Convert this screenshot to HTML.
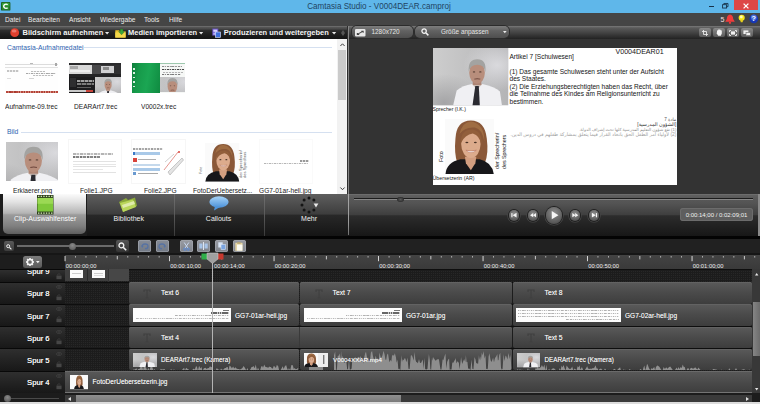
<!DOCTYPE html>
<html lang="de">
<head>
<meta charset="utf-8">
<title>Camtasia Studio - V0004DEAR.camproj</title>
<style>
html,body{margin:0;padding:0;}
body{width:760px;height:404px;position:relative;overflow:hidden;background:#2c2c2c;font-family:"Liberation Sans",sans-serif;}
.a{position:absolute;}
.t{position:absolute;white-space:nowrap;line-height:1;}
svg{position:absolute;overflow:visible;}
#title{left:0;top:0;width:760px;height:12.7px;background:#5fb7ea;}
#title .cap{left:-0.7px;width:760px;text-align:center;top:2.1px;font-size:8.8px;color:#1f4462;transform:scaleX(.92);transform-origin:379.5px 0;}
#menu{left:0;top:12.7px;width:760px;height:13.3px;background:#454545;}
#menu .t{top:2.9px;font-size:7.2px;color:#ececec;transform:scaleX(.915);transform-origin:0 0;}
#tbL{left:0;top:26px;width:349px;height:13px;background:linear-gradient(#787878 0,#575757 9%,#464646 24%,#2d2d2d 34%,#202020 60%,#141414 100%);}
#tbL .t{top:3px;font-size:7.5px;font-weight:bold;color:#f4f4f4;}
#tbR{left:349px;top:26px;width:411px;height:13px;background:linear-gradient(#7a7a7a 0,#5a5a5a 15%,#444 50%,#222 100%);}
.pill{position:absolute;top:0.3px;height:12.2px;border-radius:5px;background:linear-gradient(#7e7e7e,#626262 40%,#4e4e4e);box-shadow:0 0 0 1px #2c2c2c;}
.pill .t{font-size:6.4px;color:#e6e6e6;top:3px;}
.vb{position:absolute;top:2px;width:12px;height:9px;border-radius:2px;background:linear-gradient(#8a8a8a,#5a5a5a);}
#bin{left:0;top:39px;width:337px;height:155px;background:#fff;overflow:hidden;}
#bin .h{font-size:7.3px;color:#2f64b0;transform:scaleX(.93);transform-origin:0 0;margin-top:-0.3px;}
#bin .l{font-size:7.1px;color:#1a1a1a;transform:scaleX(.93);transform-origin:0 0;margin-top:0.7px;}
#bin .hl{position:absolute;height:1px;background:#d5e0f0;}
.th{position:absolute;overflow:hidden;}
#sb{left:337px;top:39px;width:10px;height:155px;background:#f2f2f2;}
#tabs{left:0;top:193.7px;width:349px;height:42px;background:#1c1c1c;}
.tab{position:absolute;top:0;height:42px;background:linear-gradient(#5e5e5e 0,#3d3d3d 48%,#282828 50%,#151515 100%);}
.tab .t{top:21.5px;font-size:7px;color:#efefef;left:0;width:100%;text-align:center;}
#prev{left:349px;top:39px;width:411px;height:155px;background:#333;}
#canvas{left:432.5px;top:47.7px;width:244.3px;height:137.1px;background:#fff;overflow:hidden;color:#111;}
#canvas .t{font-size:6.55px;color:#151515;}
#canvas .ar{font-family:"Liberation Sans","DejaVu Sans",sans-serif;}
#play{left:349px;top:194px;width:411px;height:42px;background:linear-gradient(#626262 0,#585858 12%,#545454 22%,#3f3f3f 49%,#2c2c2c 52%,#171717 100%);}
#tl{left:0;top:236px;width:760px;height:168px;background:#212121;overflow:hidden;}
.trk{position:absolute;left:0;width:65px;overflow:hidden;background:linear-gradient(#2f2f2f,#222 55%,#181818);border-top:1px solid #080808;box-sizing:border-box;}
.trk .t{left:27px;font-size:7.7px;color:#fafafa;text-shadow:0 0 .4px #ddd;}
.lane{position:absolute;left:65px;width:687px;background-color:#1c1c1c;background-image:linear-gradient(45deg,#272727 25%,transparent 25%,transparent 75%,#272727 75%);background-size:2px 2px;border-top:1px solid #0e0e0e;box-sizing:border-box;}
.clip{position:absolute;border-radius:2px;background:linear-gradient(#5a5a5a,#4a4a4a 50%,#3d3d3d);box-sizing:border-box;overflow:hidden;box-shadow:inset 0 1px 0 #626262;}
.clip .t{font-size:6.55px;color:#f6f6f6;text-shadow:0 0 .4px rgba(255,255,255,.55);}
.tlb{position:absolute;top:4px;height:12.2px;width:13.4px;border-radius:2.5px;background:linear-gradient(#999ca3,#7f838b);box-shadow:inset 0 0 0 .6px #a8abb2;}
</style>
</head>
<body>
<svg width="0" height="0" style="position:absolute"><defs>
<linearGradient id="gm" x1="0" x2="1"><stop offset="0" stop-color="#cdcdcd"/><stop offset="1" stop-color="#b4b4b6"/></linearGradient>
<radialGradient id="gm2" cx=".15" cy=".95" r=".5"><stop offset="0" stop-color="#9c9c9e" stop-opacity=".8"/><stop offset="1" stop-color="#9c9c9e" stop-opacity="0"/></radialGradient>
<radialGradient id="gm3" cx=".85" cy=".3" r=".45"><stop offset="0" stop-color="#e2e2e6" stop-opacity=".8"/><stop offset="1" stop-color="#e2e2e6" stop-opacity="0"/></radialGradient>
<symbol id="man" viewBox="0 0 300 233" preserveAspectRatio="none">
<rect width="300" height="233" fill="url(#gm)"/>
<rect width="300" height="233" fill="url(#gm2)"/><rect width="300" height="233" fill="url(#gm3)"/>
<path d="M80 233 L94 172 Q118 152 156 146 L196 146 Q246 158 266 176 L274 233Z" fill="#f0f0f3"/>
<path d="M156 146 L174 170 L196 146Z" fill="#cdbfb8"/>
<path d="M168 154 L182 154 L186 233 L157 233Z" fill="#2b2b31"/>
<rect x="158" y="120" width="34" height="30" fill="#ad8473"/>
<ellipse cx="175" cy="100" rx="31" ry="45" fill="#b88e7c"/>
<path d="M142 96 Q138 46 176 46 Q214 46 208 98 Q204 68 176 68 Q148 68 142 96Z" fill="#a3a3a1"/>
<ellipse cx="163" cy="97" rx="5" ry="2.5" fill="#5a4238"/><ellipse cx="188" cy="97" rx="5" ry="2.5" fill="#5a4238"/>
<path d="M164 126 Q176 122 188 126" stroke="#6e463c" stroke-width="4" fill="none"/>
</symbol>
<symbol id="woman" viewBox="0 0 197 219" preserveAspectRatio="none">
<rect width="197" height="219" fill="#fafafa"/>
<path d="M104 6 Q46 6 42 78 Q36 140 50 176 L160 176 Q176 140 168 78 Q160 6 104 6Z" fill="#8a5838"/>
<path d="M104 10 Q70 12 58 60 Q80 30 120 34 Q150 40 158 90 Q160 20 104 10Z" fill="#a87648" opacity=".7"/>
<path d="M2 219 Q6 172 62 160 L140 160 Q190 172 196 219Z" fill="#17171a"/>
<path d="M80 150 L126 150 L122 176 L104 204 L84 176Z" fill="#d29e80"/>
<ellipse cx="104" cy="100" rx="39" ry="55" fill="#dcab8c"/>
<path d="M64 96 Q62 40 112 42 Q152 50 146 104 Q140 66 112 58 Q80 62 64 96Z" fill="#925f3b"/>
<ellipse cx="88" cy="94" rx="6" ry="3" fill="#4a3428"/><ellipse cx="122" cy="94" rx="6" ry="3" fill="#4a3428"/>
<path d="M84 124 Q104 142 126 124 Q104 131 84 124Z" fill="#fff" stroke="#b06a5a" stroke-width="2"/>
</symbol>
</defs></svg>
<div id="title" class="a"><svg style="left:0.8px;top:2.2px" width="9.4" height="8.6" viewBox="0 0 11 11" preserveAspectRatio="none"><rect x="0" y="0" width="11" height="11" rx="1.2" fill="#1d5a20"/><rect x="1" y="1" width="9" height="5" rx="1" fill="#35a13a"/><rect x="1" y="5" width="9" height="5" fill="#2a8a2e"/><path d="M7.8 3.6 A2.7 2.7 0 1 0 7.8 7.4" stroke="#fff" stroke-width="1.7" fill="none"/></svg><div class="t cap">Camtasia Studio - V0004DEAR.camproj</div><div class="a" style="left:709px;top:6px;width:5px;height:1.4px;background:#16324a"></div><svg style="left:722.3px;top:2.5px" width="6.6" height="5.6" viewBox="0 0 8 7"><rect x="0.6" y="2.1" width="5" height="4.2" fill="none" stroke="#16324a" stroke-width="1.1"/><path d="M2.2 2 V0.6 H7.4 V4.6 H5.8" fill="none" stroke="#16324a" stroke-width="1.1"/></svg><div class="a" style="left:733.5px;top:0;width:24.5px;height:9.8px;background:#dd4747"></div><svg style="left:743px;top:2.5px" width="6" height="6" viewBox="0 0 6 6"><path d="M0.6 0.6 L5.4 5.4 M5.4 0.6 L0.6 5.4" stroke="#fff" stroke-width="1.3"/></svg></div>
<div id="menu" class="a"><div class="t" style="left:4.5px">Datei</div><div class="t" style="left:28.3px">Bearbeiten</div><div class="t" style="left:68.5px">Ansicht</div><div class="t" style="left:99.5px">Wiedergabe</div><div class="t" style="left:144px">Tools</div><div class="t" style="left:169px">Hilfe</div><div class="t" style="left:720.5px;color:#f6e0e0;font-size:7px;top:2.9px;transform:none">5</div><svg style="left:725px;top:1.8px" width="10" height="10" viewBox="0 0 10 10"><path d="M5 0.4 Q1.8 1 1.8 5 L0.2 7.8 H9.8 L8.2 5 Q8.2 1 5 0.4Z" fill="#f03c3c"/><circle cx="5" cy="8.8" r="1.1" fill="#f03c3c"/></svg><svg style="left:738px;top:1.2px" width="7.4" height="10.2" viewBox="0 0 8 11"><circle cx="4" cy="4" r="3.3" fill="#f6e81e"/><path d="M2.4 6 H5.6 L5 9 H3Z" fill="#e6cf1c"/><circle cx="3.6" cy="3.2" r="1.5" fill="#fffcc0"/></svg><svg style="left:749px;top:1.2px" width="9.6" height="9.6" viewBox="0 0 10 10"><circle cx="5" cy="5" r="4.6" fill="#1838b4"/><circle cx="5" cy="3.6" r="3" fill="#5f86ea" opacity=".7"/><text x="5" y="7.8" font-size="7.5" font-weight="bold" text-anchor="middle" fill="#fff" font-family="Liberation Sans, sans-serif">?</text></svg></div>
<div id="tbL" class="a"><svg style="left:9.6px;top:2.2px" width="9.4" height="9.4" viewBox="0 0 10 10"><circle cx="5" cy="5" r="4.7" fill="#e0402e"/><ellipse cx="4.4" cy="3.2" rx="2.6" ry="1.7" fill="#f08a80" opacity=".75"/></svg><div class="t" style="left:22.5px">Bildschirm aufnehmen</div><svg style="left:104.5px;top:5.5px" width="4.2" height="2.4" viewBox="0 0 4 2.4" preserveAspectRatio="none"><path d="M0 0 H4 L2 2.4Z" fill="#e8e8e8"/></svg><svg style="left:114.5px;top:2.5px" width="11" height="9" viewBox="0 0 11 9"><path d="M0.3 1.2 H4 L5 2.2 H10.6 V8.6 H0.3Z" fill="#e9c22e"/><path d="M0.3 3.4 H10.6 V8.6 H0.3Z" fill="#f4d84a"/><path d="M5.2 0.2 H8 V2.6 H9.6 L6.6 5.8 L3.6 2.6 H5.2Z" fill="#3aa63a" stroke="#1e6a1e" stroke-width=".4"/></svg><div class="t" style="left:128px">Medien importieren</div><svg style="left:199.2px;top:5.5px" width="4.2" height="2.4" viewBox="0 0 4 2.4" preserveAspectRatio="none"><path d="M0 0 H4 L2 2.4Z" fill="#e8e8e8"/></svg><svg style="left:212px;top:2px" width="9" height="10" viewBox="0 0 9 10"><rect x="0.3" y="0.6" width="6" height="7" fill="#6a54c8"/><rect x="1.3" y="1.6" width="4" height="2.2" fill="#d9d2ff"/><rect x="1.3" y="4.6" width="4" height="2.2" fill="#b9aef5"/><rect x="3.4" y="4" width="5.2" height="5.4" fill="#3f6fdc" stroke="#dfe6ff" stroke-width=".6"/></svg><div class="t" style="left:223.8px">Produzieren und weitergeben</div><svg style="left:332px;top:5.5px" width="4.2" height="2.4" viewBox="0 0 4 2.4" preserveAspectRatio="none"><path d="M0 0 H4 L2 2.4Z" fill="#e8e8e8"/></svg><svg style="left:341px;top:4px" width="4" height="6" viewBox="0 0 4 6"><path d="M2 0 L4 3 L2 6 L0 3Z" fill="#555"/></svg></div>
<div id="tbR" class="a"><div class="pill" style="left:2.5px;width:61px"><svg style="left:3px;top:2.3px" width="10.5" height="7.6" viewBox="0 0 9 7" preserveAspectRatio="none"><rect x="0" y="0" width="9" height="7" rx="1" fill="#e8e8e8"/><path d="M2 5 L7 2 M5.4 2 H7 V3.4 M2 3.6 V5 H3.6" stroke="#444" stroke-width=".9" fill="none"/></svg><div class="t" style="left:20px">1280x720</div></div><div class="pill" style="left:66px;width:94px"><svg style="left:6px;top:2px" width="8" height="8" viewBox="0 0 8 8"><circle cx="3.1" cy="3.1" r="2.2" fill="none" stroke="#f4f4f4" stroke-width="1.3"/><path d="M4.8 4.8 L7.4 7.4" stroke="#f4f4f4" stroke-width="1.5"/></svg><div class="t" style="left:26px">Größe anpassen</div><svg style="left:87.5px;top:5px" width="3.6" height="2.2" viewBox="0 0 4 2.4" preserveAspectRatio="none"><path d="M0 0 H4 L2 2.4Z" fill="#eee"/></svg></div><div class="vb" style="left:350px"><svg style="left:3px;top:1.5px" width="6" height="6" viewBox="0 0 6 6"><path d="M1.5 0 V4.5 H6 M0 1.5 H4.5 V6" stroke="#e8e8e8" stroke-width=".9" fill="none"/></svg></div><div class="vb" style="left:364px"><svg style="left:2.5px;top:1px" width="7" height="7" viewBox="0 0 7 7"><path d="M1 3.4 V1.6 L2.2 1.2 V0.6 L3.4 0.4 V0.6 L4.6 0.8 V1.2 L5.8 1.6 V4.6 L4.8 6.8 H2.2 L0.4 4 Z" fill="#f4f4f4"/></svg></div><div class="vb" style="left:378px"><svg style="left:2px;top:1.5px" width="8" height="6" viewBox="0 0 8 6"><rect x="2" y="1.4" width="4" height="3.2" fill="#f0f0f0"/><path d="M0.5 2 V0.5 H2 M6 0.5 H7.5 V2 M7.5 4 V5.5 H6 M2 5.5 H0.5 V4" stroke="#f0f0f0" stroke-width=".9" fill="none"/></svg></div><div class="vb" style="left:392px"><svg style="left:2px;top:1.5px" width="8" height="6" viewBox="0 0 8 6"><rect x="0.4" y="0.4" width="5" height="3.6" fill="#f0f0f0"/><rect x="3" y="2.4" width="4.6" height="3.2" fill="#f0f0f0" stroke="#6a6a6a" stroke-width=".6"/></svg></div></div>
<div id="bin" class="a"><div class="t h" style="left:7px;top:5.1px">Camtasia-Aufnahmedatei</div><div class="hl" style="left:84px;top:8.3px;width:248px"></div><div class="th" style="left:5px;top:23px;width:53.2px;height:31px;background:#fefefe;"><div class="a" style="left:0;top:1.5px;width:53px;height:1px;background:#dcdcdc"></div><div class="a" style="left:25px;top:0.8px;width:3px;height:1.6px;background:#b8b8b8"></div><div class="a" style="left:50px;top:1px;width:2px;height:3px;background:#a8a8a8"></div><div class="a" style="left:0;top:5.4px;width:53px;height:1px;background:#e2e2e2"></div><div class="a" style="left:2px;top:8.4px;width:12px;height:1.2px;background:repeating-linear-gradient(90deg,#c4c4c4 0 2px,#eee 2px 3px)"></div><div class="a" style="left:26px;top:8.6px;width:14px;height:1.2px;background:repeating-linear-gradient(90deg,#bcbcbc 0 2px,#eee 2px 3px)"></div><div class="a" style="left:21px;top:11px;width:30px;height:1.4px;background:repeating-linear-gradient(90deg,#a6a6a6 0 1.5px,#ddd 1.5px 2.5px,#b4b4b4 2.5px 4px,#eee 4px 5px)"></div><div class="a" style="left:28px;top:13px;width:20px;height:1.2px;background:repeating-linear-gradient(90deg,#bdbdbd 0 2px,#eee 2px 3px)"></div><div class="a" style="left:2px;top:16px;width:4px;height:1px;background:#ddd"></div><div class="a" style="left:24px;top:16px;width:5px;height:1px;background:#d4d4d4"></div><div class="a" style="left:0.5px;top:28.6px;width:52px;height:2px;background:repeating-linear-gradient(90deg,#b8473c 0 2px,#cf7a6c 2px 3px,#a83a30 3px 4.5px,#d89a8c 4.5px 5px)"></div></div><div class="th" style="left:69.3px;top:24.2px;width:52.2px;height:29.6px;background:#38383a;"><div class="a" style="left:0;top:0;width:52.2px;height:2px;background:#2a2a2c"></div><div class="a" style="left:0;top:2px;width:23px;height:8.5px;background:#d9d9d9"></div><div class="a" style="left:1px;top:3px;width:8px;height:3px;background:#a8a8a8"></div><div class="a" style="left:1px;top:7px;width:20px;height:2px;background:#efefef"></div><div class="a" style="left:23px;top:2px;width:9px;height:8.5px;background:#48484a"></div><div class="a" style="left:32px;top:3px;width:13px;height:7px;background:#d0d0d2"></div><div class="a" style="left:34px;top:4px;width:6px;height:3px;background:#8a8a8a"></div><div class="a" style="left:45px;top:2px;width:7.2px;height:8.5px;background:#303032"></div><div class="a" style="left:0;top:10.5px;width:52.2px;height:3px;background:#232325"></div><div class="a" style="left:0;top:13.5px;width:26px;height:16.1px;background:#1c1c1e"></div><div class="a" style="left:1px;top:14.5px;width:6px;height:9px;background:#2e2e30"></div><div class="a" style="left:8px;top:16.4px;width:17px;height:2px;background:repeating-linear-gradient(90deg,#a0a0a0 0 3px,#555 3px 4px)"></div><div class="a" style="left:8px;top:20px;width:17px;height:2.2px;background:repeating-linear-gradient(90deg,#7c7c7c 0 4px,#444 4px 5px)"></div><div class="a" style="left:8px;top:23.4px;width:14px;height:1.6px;background:#5c5c5c"></div><div class="a" style="left:0;top:27.2px;width:17px;height:2px;background:#c8c8c8"></div><div class="a" style="left:17px;top:27.2px;width:7px;height:2px;background:#c8433a"></div><svg style="left:26px;top:14px;overflow:hidden" width="26.2" height="15.6" viewBox="60 30 230 137" preserveAspectRatio="none"><use href="#man" width="300" height="233"/></svg></div><div class="th" style="left:132.2px;top:23.5px;width:52.8px;height:30px;background:#f6f8f6;"><div class="a" style="left:0;top:0;width:28px;height:30px;background:linear-gradient(100deg,#0d7d3a 0,#169a4a 25%,#1ba653 55%,#0f8a40 100%)"></div><div class="a" style="left:1px;top:5px;width:1.6px;height:20px;background:repeating-linear-gradient(#d8efe0 0 1.6px,transparent 1.6px 4.4px)"></div><div class="a" style="left:28px;top:0;width:24.8px;height:1.4px;background:#9ec8ae"></div><div class="a" style="left:29.5px;top:3.6px;width:20px;height:1.3px;background:repeating-linear-gradient(90deg,#8c8c8c 0 2px,#ddd 2px 3px,#9a9a9a 3px 4.4px,#eee 4.4px 5.2px)"></div><div class="a" style="left:29.5px;top:6.2px;width:22px;height:1.5px;background:repeating-linear-gradient(90deg,#444 0 2px,#bbb 2px 2.8px,#555 2.8px 4.4px,#ddd 4.4px 5px)"></div><div class="a" style="left:31px;top:9px;width:20px;height:1.2px;background:repeating-linear-gradient(90deg,#b4b4b4 0 2px,#eee 2px 3px)"></div><div class="a" style="left:29.5px;top:11.4px;width:19px;height:1.4px;background:repeating-linear-gradient(90deg,#777 0 2px,#ddd 2px 3px,#8a8a8a 3px 4.4px,#eee 4.4px 5.2px)"></div><svg style="left:28px;top:14.8px;overflow:hidden" width="24.8" height="15.2" viewBox="95 40 160 98" preserveAspectRatio="none"><use href="#man" width="300" height="233"/></svg></div><div class="t l" style="left:5px;top:64.5px">Aufnahme-09.trec</div><div class="t l" style="left:74px;top:64.5px">DEARArt7.trec</div><div class="t l" style="left:141px;top:64.5px">V0002x.trec</div><div class="t h" style="left:7px;top:89.4px">Bild</div><div class="hl" style="left:21px;top:92.5px;width:311px"></div><svg style="left:5.5px;top:103px;overflow:hidden" width="52.5" height="39" viewBox="76 28 190 150" preserveAspectRatio="none"><use href="#man" width="300" height="233"/></svg><div class="th" style="left:69px;top:101px;width:52px;height:43px;background:#fff;box-shadow:0 0 0 1px #f6f6f6;"><div class="a" style="left:4px;top:13px;width:40px;height:1.5px;background:repeating-linear-gradient(90deg,#b4b4b4 0 3px,#e0e0e0 3px 4px,#c0c0c0 4px 6px,#f0f0f0 6px 7px)"></div><div class="a" style="left:4px;top:16px;width:27px;height:1.5px;background:repeating-linear-gradient(90deg,#777 0 2px,#ccc 2px 3px,#888 3px 6px,#e8e8e8 6px 7px)"></div><div class="a" style="left:4px;top:21px;width:43px;height:1px;background:#e2e2e2"></div><div class="a" style="left:4px;top:23.5px;width:43px;height:1px;background:#e6e6e6"></div><div class="a" style="left:4px;top:26px;width:43px;height:1px;background:#e2e2e2"></div><div class="a" style="left:4px;top:28.5px;width:30px;height:1px;background:#e6e6e6"></div><div class="a" style="left:4px;top:32px;width:43px;height:1px;background:#e2e2e2"></div></div><div class="th" style="left:132px;top:101px;width:53px;height:43px;background:#fff;box-shadow:0 0 0 1px #f6f6f6;"><div class="a" style="left:1px;top:8px;width:30px;height:1.5px;background:repeating-linear-gradient(90deg,#a0a0a0 0 2px,#e4e4e4 2px 3px,#b0b0b0 3px 5px,#f0f0f0 5px 6px)"></div><div class="a" style="left:1px;top:12px;width:27px;height:3px;background:#a9c9e8"></div><div class="a" style="left:1px;top:12px;width:2px;height:3px;background:#3a7ac8"></div><div class="a" style="left:1px;top:17.5px;width:4px;height:4px;background:#d8423a"></div><div class="a" style="left:6px;top:19px;width:18px;height:1px;background:#b0b0b0"></div><div class="a" style="left:1px;top:24px;width:27px;height:2px;background:#c5d9ec"></div><div class="a" style="left:1px;top:28px;width:27px;height:2.5px;background:#a9c9e8"></div><div class="a" style="left:1px;top:32px;width:3px;height:3px;background:#6a9ad0"></div><div class="a" style="left:6px;top:33px;width:20px;height:1px;background:#a8a8a8"></div><svg style="left:30px;top:8px" width="22" height="30" viewBox="0 0 22 30"><path d="M2 22 L16 4" stroke="#d86a60" stroke-width=".7"/><path d="M6 24 L20 10 L21.5 12 L8 27Z" fill="#e4e4e4" stroke="#9a9a9a" stroke-width=".5"/><path d="M3 14 L12 6" stroke="#b0b0b0" stroke-width=".6"/><circle cx="17" cy="4" r="1" fill="#d8423a"/></svg></div><div class="th" style="left:196px;top:101px;width:56px;height:43px;background:#fff;"><svg style="left:8.5px;top:2.7px" width="34.5" height="38.8"><use href="#woman" width="34.5" height="38.8"/></svg><div class="t" style="left:43.2px;top:37.6px;font-size:4.1px;color:#555;transform:rotate(-90deg);transform-origin:0 0;line-height:1.02;white-space:pre">der Sprecherin/
des Sprechers</div><div class="t" style="left:4.2px;top:34.2px;font-size:3.6px;color:#555;transform:rotate(-90deg);transform-origin:0 0;">Foto</div></div><div class="th" style="left:260px;top:101px;width:52px;height:43px;background:#fff;box-shadow:0 0 0 1px #fafafa;"><div class="a" style="left:4px;top:22.5px;width:44px;height:1.5px;background:repeating-linear-gradient(90deg,#b5b5b5 0 2px,#e4e4e4 2px 3px,#c4c4c4 3px 4px,#eee 4px 5px)"></div><div class="a" style="left:40px;top:20px;width:9px;height:2px;background:repeating-linear-gradient(90deg,#999 0 2px,#ddd 2px 3px)"></div></div><div class="t l" style="left:12.5px;top:148.5px">Erklaerer.png</div><div class="t l" style="left:80px;top:148.5px">Folie1.JPG</div><div class="t l" style="left:143.5px;top:148.5px">Folie2.JPG</div><div class="t l" style="left:193px;top:148.5px">FotoDerUebersetz...</div><div class="t l" style="left:259px;top:148.5px">GG7-01ar-hell.jpg</div></div>
<div id="sb" class="a"><div class="a" style="left:1.4px;top:11px;width:8px;height:50px;background:#cbcbcb"></div><svg style="left:2.5px;top:3.5px" width="5" height="3.5" viewBox="0 0 5 3.5"><path d="M0.4 3 L2.5 0.8 L4.6 3" stroke="#404040" stroke-width="1" fill="none"/></svg><svg style="left:2.5px;top:148px" width="5" height="3.5" viewBox="0 0 5 3.5"><path d="M0.4 0.5 L2.5 2.7 L4.6 0.5" stroke="#404040" stroke-width="1" fill="none"/></svg></div>
<div class="a" style="left:346.6px;top:26px;width:2.6px;height:168px;background:#2e2e2e"></div><div class="a" style="left:347.7px;top:26px;width:1.2px;height:168px;background:#858585"></div><div id="tabs" class="a"><div class="tab" style="left:3px;width:83px;background:linear-gradient(#fbfbfb 0,#e2e2e2 20%,#b4b4b4 48%,#9c9c9c 52%,#808080 80%,#5e5e5e 100%);border-radius:0 0 5px 5px;height:40.5px;"><svg style="left:33.5px;top:1px" width="16.5" height="19.5" viewBox="0 0 19 20" preserveAspectRatio="none"><rect x="0" y="0" width="19" height="20" fill="#2a3a1a"/><rect x="0.5" y="3" width="18" height="14" fill="#7ec83a"/><rect x="0.5" y="3" width="18" height="6" fill="#a8e060" opacity=".7"/><rect x="1.2" y="0.7" width="1.6" height="1.4" fill="#cfe8b0"/><rect x="1.2" y="17.9" width="1.6" height="1.4" fill="#cfe8b0"/><rect x="4.2" y="0.7" width="1.6" height="1.4" fill="#cfe8b0"/><rect x="4.2" y="17.9" width="1.6" height="1.4" fill="#cfe8b0"/><rect x="7.2" y="0.7" width="1.6" height="1.4" fill="#cfe8b0"/><rect x="7.2" y="17.9" width="1.6" height="1.4" fill="#cfe8b0"/><rect x="10.2" y="0.7" width="1.6" height="1.4" fill="#cfe8b0"/><rect x="10.2" y="17.9" width="1.6" height="1.4" fill="#cfe8b0"/><rect x="13.2" y="0.7" width="1.6" height="1.4" fill="#cfe8b0"/><rect x="13.2" y="17.9" width="1.6" height="1.4" fill="#cfe8b0"/><rect x="16.2" y="0.7" width="1.6" height="1.4" fill="#cfe8b0"/><rect x="16.2" y="17.9" width="1.6" height="1.4" fill="#cfe8b0"/></svg><div class="t" style="left:0.6px;top:21.6px;color:#fff;text-shadow:0 0 1px #888">Clip-Auswahlfenster</div></div><div class="tab" style="left:87px;width:87px"><svg style="left:31px;top:3px" width="20" height="16" viewBox="0 0 20 16"><path d="M1 5 L8 1 L10 3 L17 0.5 L19 9 L5 15 Z" fill="#8aa83a"/><path d="M2 6 L15 2.5 L18 10 L5 15Z" fill="#b9d65a"/><path d="M4 8 L16 4 L17 7 L5 11Z" fill="#e8f0c0" opacity=".8"/></svg><div class="t" style="left:-1.75px">Bibliothek</div></div><div class="a" style="left:174px;top:0;width:1px;height:42px;background:linear-gradient(#707070,#5a5a5a 50%,#3a3a3a)"></div><div class="tab" style="left:175px;width:89px"><svg style="left:34px;top:2px" width="20" height="15" viewBox="0 0 20 15"><defs><linearGradient id="gb" x1="0" y1="0" x2="0" y2="1"><stop offset="0" stop-color="#a8d4f8"/><stop offset="1" stop-color="#4a90d8"/></linearGradient></defs><ellipse cx="10" cy="6" rx="9.6" ry="5.8" fill="url(#gb)"/><path d="M6 10 L5 14.6 L11 11Z" fill="#4f95dc"/></svg><div class="t" style="left:-1px">Callouts</div></div><div class="a" style="left:264px;top:0;width:1px;height:42px;background:linear-gradient(#707070,#5a5a5a 50%,#3a3a3a)"></div><div class="tab" style="left:265px;width:83px"><svg style="left:35px;top:2px" width="18" height="18" viewBox="0 0 18 18"><circle cx="9.0" cy="2.0" r="1.5" fill="#141414"/><circle cx="13.9" cy="4.1" r="1.5" fill="#141414"/><path d="M13.6 7.4 H18.4 L16.0 11.4Z" fill="#e8e8e8"/><circle cx="13.9" cy="13.9" r="1.5" fill="#141414"/><circle cx="9.0" cy="16.0" r="1.5" fill="#141414"/><circle cx="4.1" cy="13.9" r="1.5" fill="#141414"/><circle cx="2.0" cy="9.0" r="1.5" fill="#141414"/><circle cx="4.1" cy="4.1" r="1.5" fill="#141414"/></svg><div class="t" style="left:2.6px">Mehr</div></div><div class="a" style="left:347.5px;top:0;width:1.4px;height:41.5px;background:linear-gradient(#a6a6a6,#9a9a9a 70%,#707070)"></div></div>
<div id="prev" class="a"></div><div id="canvas" class="a"><svg style="left:0;top:0" width="75.5" height="57.6"><use href="#man" width="75.5" height="57.6"/></svg><div class="t" style="left:0px;top:59.1px;font-size:5.15px">Sprecher (I.K.)</div><div class="t" style="left:183px;top:0.9px;font-size:7.1px">V0004DEAR01</div><div class="t" style="left:77px;top:6.20px">Artikel 7 [Schulwesen]</div><div class="t" style="left:77px;top:21.14px">(1) Das gesamte Schulwesen steht unter der Aufsicht</div><div class="t" style="left:77px;top:28.61px">des Staates.</div><div class="t" style="left:77px;top:36.08px">(2) Die Erziehungsberechtigten haben das Recht, über</div><div class="t" style="left:77px;top:43.55px">die Teilnahme des Kindes am Religionsunterricht zu</div><div class="t" style="left:77px;top:51.02px">bestimmen.</div><svg style="left:12.5px;top:71.6px" width="49" height="55"><use href="#woman" width="49" height="55"/></svg><div class="t" style="left:0px;top:127.9px;font-size:5.25px">Übersetzerin (AR)</div><div class="t" style="left:6.8px;top:114.8px;font-size:5.3px;transform:rotate(-90deg);transform-origin:0 0;">Foto</div><div class="t" style="left:61.3px;top:121.1px;font-size:5.3px;transform:rotate(-90deg);transform-origin:0 0;line-height:1.27;white-space:pre">der Sprecherin/
des Sprechers</div><div class="t ar" dir="rtl" style="right:0.5px;top:70.6px;font-size:4.6px;color:#555">مادة 7</div><div class="t ar" dir="rtl" style="right:0.5px;top:74.9px;font-size:4.95px;color:#333">[الشؤون المدرسية]</div><div class="t ar" dir="rtl" style="right:0.5px;top:80.3px;font-size:4.24px;color:#8a8a8a">(1) تقع شؤون التعليم المدرسية كلها تحت إشراف الدولة.</div><div class="t ar" dir="rtl" style="right:0.5px;top:85.5px;font-size:4.8px;color:#a0a0a0">(2) لأولياء أمر الطفل الحق باتخاذ القرار فيما يتعلق بمشاركة طفلهم في دروس الدين.</div></div>
<div id="play" class="a"><div class="a" style="left:0;top:0;width:411px;height:1px;background:#6c6c6c"></div><div class="a" style="left:5px;top:4.1px;width:399px;height:1px;background:#1c1c1c"></div><div class="a" style="left:5px;top:5.1px;width:399px;height:1px;background:#868686"></div><div class="a" style="left:47.7px;top:2.6px;width:7.6px;height:5.4px;border-radius:50%;background:radial-gradient(#5a5a5a,#161616)"></div><div class="a" style="left:160.1px;top:16.3px;width:10.4px;height:10.4px;border-radius:50%;background:radial-gradient(circle at 50% 35%,#8e8e8e,#5a5a5a 70%,#3a3a3a);box-shadow:0 0 0 1px #202020, 0 0 0 1.6px #4a4a4a;"><svg style="left:0;top:0" width="10.4" height="10.4" viewBox="-10 -10 20 20"><rect x="-5.5" y="-4" width="2.2" height="8" fill="#f6f6f6"/><path d="M4.5 -4.5 V4.5 L-3 0Z" fill="#f6f6f6"/></svg></div><div class="a" style="left:178.8px;top:16.3px;width:10.4px;height:10.4px;border-radius:50%;background:radial-gradient(circle at 50% 35%,#8e8e8e,#5a5a5a 70%,#3a3a3a);box-shadow:0 0 0 1px #202020, 0 0 0 1.6px #4a4a4a;"><svg style="left:0;top:0" width="10.4" height="10.4" viewBox="-10 -10 20 20"><path d="M0 -4 V4 L-6 0Z" fill="#f6f6f6"/><path d="M5.5 -4 V4 L-0.5 0Z" fill="#f6f6f6"/></svg></div><div class="a" style="left:196.8px;top:13.3px;width:16.4px;height:16.4px;border-radius:50%;background:radial-gradient(circle at 50% 35%,#8e8e8e,#5a5a5a 70%,#3a3a3a);box-shadow:0 0 0 1px #202020, 0 0 0 1.6px #4a4a4a;"><svg style="left:0;top:0" width="16.4" height="16.4" viewBox="-10 -10 20 20"><path d="M-3 -5 V5 L5.2 0Z" fill="#f6f6f6"/></svg></div><div class="a" style="left:220.8px;top:16.3px;width:10.4px;height:10.4px;border-radius:50%;background:radial-gradient(circle at 50% 35%,#8e8e8e,#5a5a5a 70%,#3a3a3a);box-shadow:0 0 0 1px #202020, 0 0 0 1.6px #4a4a4a;"><svg style="left:0;top:0" width="10.4" height="10.4" viewBox="-10 -10 20 20"><path d="M0 -4 V4 L6 0Z" fill="#f6f6f6"/><path d="M-5.5 -4 V4 L0.5 0Z" fill="#f6f6f6"/></svg></div><div class="a" style="left:239.6px;top:16.3px;width:10.4px;height:10.4px;border-radius:50%;background:radial-gradient(circle at 50% 35%,#8e8e8e,#5a5a5a 70%,#3a3a3a);box-shadow:0 0 0 1px #202020, 0 0 0 1.6px #4a4a4a;"><svg style="left:0;top:0" width="10.4" height="10.4" viewBox="-10 -10 20 20"><rect x="3.3" y="-4" width="2.2" height="8" fill="#f6f6f6"/><path d="M-4.5 -4.5 V4.5 L3 0Z" fill="#f6f6f6"/></svg></div><div class="a" style="left:331px;top:14px;width:73px;height:13px;border-radius:3px;background:#5e5e5e;box-shadow:0 0 0 1px #6c6c6c inset"><div class="t" style="left:0;width:73px;text-align:center;top:3.5px;font-size:6px;color:#f0f0f0">0:00:14;00 / 0:02:09;01</div></div><div class="a" style="left:409px;top:0;width:2px;height:42px;background:#8a8a8a"></div></div>
<div id="tl" class="a"><div class="a" style="left:0;top:-0.5px;width:760px;height:4px;background:#040404"></div><div class="a" style="left:0;top:3px;width:760px;height:16px;background:#212121"></div><div class="a" style="left:3.5px;top:5px;width:10.5px;height:10px;border-radius:2px;background:linear-gradient(#5a5a5a,#3c3c3c)"><svg style="left:2.5px;top:2.5px" width="6" height="6" viewBox="0 0 6 6"><circle cx="2.2" cy="2.2" r="1.5" fill="none" stroke="#f0f0f0" stroke-width="1"/><path d="M3.4 3.4 L5.4 5.4" stroke="#f0f0f0" stroke-width="1.1"/></svg></div><div class="a" style="left:17px;top:9.3px;width:97px;height:1.4px;background:#6a6a6a"></div><div class="a" style="left:68.5px;top:6.5px;width:7px;height:7px;border-radius:50%;background:radial-gradient(circle at 50% 35%,#8a8a8a,#555)"></div><div class="a" style="left:116px;top:4px;width:12.5px;height:12px;border-radius:2px;background:linear-gradient(#555,#333)"><svg style="left:2px;top:2px" width="9" height="9" viewBox="0 0 9 9"><circle cx="3.4" cy="3.4" r="2.4" fill="none" stroke="#f4f4f4" stroke-width="1.3"/><path d="M5.2 5.2 L8.2 8.2" stroke="#f4f4f4" stroke-width="1.6"/></svg></div><div class="tlb" style="left:138px;background:linear-gradient(#858b97,#727985)"><svg style="left:2.5px;top:2.5px" width="8" height="7" viewBox="0 0 8 7"><path d="M1.2 3.4 Q1.2 1 4 1 Q7 1 7 3.4 Q7 5.6 4 5.6" fill="none" stroke="#5672a4" stroke-width="1.3"/><path d="M0 2.6 L1.2 5 L2.8 2.8Z" fill="#5672a4"/></svg></div><div class="tlb" style="left:155.5px;background:linear-gradient(#858b97,#727985)"><svg style="left:2.5px;top:2.5px" width="8" height="7" viewBox="0 0 8 7"><path d="M6.8 3.4 Q6.8 1 4 1 Q1 1 1 3.4 Q1 5.6 4 5.6" fill="none" stroke="#5672a4" stroke-width="1.3"/><path d="M8 2.6 L6.8 5 L5.2 2.8Z" fill="#5672a4"/></svg></div><div class="tlb" style="left:179.5px"><svg style="left:3px;top:1.5px" width="7" height="9" viewBox="0 0 7 9"><path d="M1.2 0.5 L5 6.2 M5.8 0.5 L2 6.2" stroke="#c8d8f0" stroke-width="1"/><circle cx="1.8" cy="7.2" r="1.2" fill="none" stroke="#5a8ad8" stroke-width=".9"/><circle cx="5.2" cy="7.2" r="1.2" fill="none" stroke="#5a8ad8" stroke-width=".9"/></svg></div><div class="tlb" style="left:197px"><svg style="left:2px;top:2px" width="9" height="8" viewBox="0 0 9 8"><rect x="0.3" y="1.5" width="3.2" height="5" fill="#a8c4e8"/><rect x="5.5" y="1.5" width="3.2" height="5" fill="#a8c4e8"/><path d="M4.5 0 V8" stroke="#e8eef8" stroke-width=".9"/></svg></div><div class="tlb" style="left:215px"><svg style="left:2.5px;top:2px" width="8" height="8" viewBox="0 0 8 8"><rect x="0.3" y="0.3" width="4.4" height="5.2" fill="#d8e4f4"/><rect x="3" y="2.4" width="4.6" height="5.3" fill="#7aa4e0" stroke="#e8eef8" stroke-width=".5"/></svg></div><div class="tlb" style="left:232.5px"><svg style="left:2.5px;top:1.5px" width="8" height="9" viewBox="0 0 8 9"><rect x="0.3" y="0.8" width="7.2" height="8" fill="#e6d6a4"/><rect x="2.2" y="0" width="3.4" height="1.8" fill="#b8a878"/><rect x="2" y="2.6" width="5.4" height="6" fill="#fbfbf2"/></svg></div><div class="a" style="left:0;top:16.5px;width:760px;height:2.7px;background:#161616"></div><div class="a" style="left:0;top:19px;width:65px;height:13.5px;background:#1d1d1d"></div><div class="a" style="left:65px;top:19px;width:695px;height:13.5px;background:linear-gradient(#434343,#3a3a3a)"></div><div class="a" style="left:22.5px;top:19.5px;width:19.5px;height:12.5px;border-radius:2.5px;background:linear-gradient(#7c7c7c,#5a5a5a)"><svg style="left:3.5px;top:2.2px" width="8" height="8" viewBox="-4 -4 8 8"><circle r="2.6" fill="none" stroke="#f4f4f4" stroke-width="1.5"/><rect x="-0.8" y="-4" width="1.6" height="1.6" fill="#f4f4f4" transform="rotate(0)"/><rect x="-0.8" y="-4" width="1.6" height="1.6" fill="#f4f4f4" transform="rotate(45)"/><rect x="-0.8" y="-4" width="1.6" height="1.6" fill="#f4f4f4" transform="rotate(90)"/><rect x="-0.8" y="-4" width="1.6" height="1.6" fill="#f4f4f4" transform="rotate(135)"/><rect x="-0.8" y="-4" width="1.6" height="1.6" fill="#f4f4f4" transform="rotate(180)"/><rect x="-0.8" y="-4" width="1.6" height="1.6" fill="#f4f4f4" transform="rotate(225)"/><rect x="-0.8" y="-4" width="1.6" height="1.6" fill="#f4f4f4" transform="rotate(270)"/><rect x="-0.8" y="-4" width="1.6" height="1.6" fill="#f4f4f4" transform="rotate(315)"/></svg><svg style="left:13.5px;top:5.2px" width="3.6" height="2.2" viewBox="0 0 4 2.4" preserveAspectRatio="none"><path d="M0 0 H4 L2 2.4Z" fill="#f4f4f4"/></svg></div><svg style="left:0;top:19.5px" width="760" height="6"><rect x="64.6" y="0" width="0.9" height="5.2" fill="#e8e8e8"/><rect x="75.0" y="0" width="0.9" height="1.6" fill="#b8b8b8"/><rect x="85.5" y="0" width="0.9" height="1.6" fill="#b8b8b8"/><rect x="95.9" y="0" width="0.9" height="1.6" fill="#b8b8b8"/><rect x="106.4" y="0" width="0.9" height="1.6" fill="#b8b8b8"/><rect x="116.8" y="0" width="0.9" height="3.4" fill="#dadada"/><rect x="127.3" y="0" width="0.9" height="1.6" fill="#b8b8b8"/><rect x="137.7" y="0" width="0.9" height="1.6" fill="#b8b8b8"/><rect x="148.2" y="0" width="0.9" height="1.6" fill="#b8b8b8"/><rect x="158.7" y="0" width="0.9" height="1.6" fill="#b8b8b8"/><rect x="169.1" y="0" width="0.9" height="5.2" fill="#e8e8e8"/><rect x="179.5" y="0" width="0.9" height="1.6" fill="#b8b8b8"/><rect x="190.0" y="0" width="0.9" height="1.6" fill="#b8b8b8"/><rect x="200.4" y="0" width="0.9" height="1.6" fill="#b8b8b8"/><rect x="210.9" y="0" width="0.9" height="1.6" fill="#b8b8b8"/><rect x="221.3" y="0" width="0.9" height="3.4" fill="#dadada"/><rect x="231.8" y="0" width="0.9" height="1.6" fill="#b8b8b8"/><rect x="242.2" y="0" width="0.9" height="1.6" fill="#b8b8b8"/><rect x="252.7" y="0" width="0.9" height="1.6" fill="#b8b8b8"/><rect x="263.1" y="0" width="0.9" height="1.6" fill="#b8b8b8"/><rect x="273.6" y="0" width="0.9" height="5.2" fill="#e8e8e8"/><rect x="284.1" y="0" width="0.9" height="1.6" fill="#b8b8b8"/><rect x="294.5" y="0" width="0.9" height="1.6" fill="#b8b8b8"/><rect x="305.0" y="0" width="0.9" height="1.6" fill="#b8b8b8"/><rect x="315.4" y="0" width="0.9" height="1.6" fill="#b8b8b8"/><rect x="325.9" y="0" width="0.9" height="3.4" fill="#dadada"/><rect x="336.3" y="0" width="0.9" height="1.6" fill="#b8b8b8"/><rect x="346.8" y="0" width="0.9" height="1.6" fill="#b8b8b8"/><rect x="357.2" y="0" width="0.9" height="1.6" fill="#b8b8b8"/><rect x="367.6" y="0" width="0.9" height="1.6" fill="#b8b8b8"/><rect x="378.1" y="0" width="0.9" height="5.2" fill="#e8e8e8"/><rect x="388.6" y="0" width="0.9" height="1.6" fill="#b8b8b8"/><rect x="399.0" y="0" width="0.9" height="1.6" fill="#b8b8b8"/><rect x="409.4" y="0" width="0.9" height="1.6" fill="#b8b8b8"/><rect x="419.9" y="0" width="0.9" height="1.6" fill="#b8b8b8"/><rect x="430.4" y="0" width="0.9" height="3.4" fill="#dadada"/><rect x="440.8" y="0" width="0.9" height="1.6" fill="#b8b8b8"/><rect x="451.2" y="0" width="0.9" height="1.6" fill="#b8b8b8"/><rect x="461.7" y="0" width="0.9" height="1.6" fill="#b8b8b8"/><rect x="472.1" y="0" width="0.9" height="1.6" fill="#b8b8b8"/><rect x="482.6" y="0" width="0.9" height="5.2" fill="#e8e8e8"/><rect x="493.1" y="0" width="0.9" height="1.6" fill="#b8b8b8"/><rect x="503.5" y="0" width="0.9" height="1.6" fill="#b8b8b8"/><rect x="513.9" y="0" width="0.9" height="1.6" fill="#b8b8b8"/><rect x="524.4" y="0" width="0.9" height="1.6" fill="#b8b8b8"/><rect x="534.9" y="0" width="0.9" height="3.4" fill="#dadada"/><rect x="545.3" y="0" width="0.9" height="1.6" fill="#b8b8b8"/><rect x="555.8" y="0" width="0.9" height="1.6" fill="#b8b8b8"/><rect x="566.2" y="0" width="0.9" height="1.6" fill="#b8b8b8"/><rect x="576.6" y="0" width="0.9" height="1.6" fill="#b8b8b8"/><rect x="587.1" y="0" width="0.9" height="5.2" fill="#e8e8e8"/><rect x="597.5" y="0" width="0.9" height="1.6" fill="#b8b8b8"/><rect x="608.0" y="0" width="0.9" height="1.6" fill="#b8b8b8"/><rect x="618.4" y="0" width="0.9" height="1.6" fill="#b8b8b8"/><rect x="628.9" y="0" width="0.9" height="1.6" fill="#b8b8b8"/><rect x="639.4" y="0" width="0.9" height="3.4" fill="#dadada"/><rect x="649.8" y="0" width="0.9" height="1.6" fill="#b8b8b8"/><rect x="660.2" y="0" width="0.9" height="1.6" fill="#b8b8b8"/><rect x="670.7" y="0" width="0.9" height="1.6" fill="#b8b8b8"/><rect x="681.1" y="0" width="0.9" height="1.6" fill="#b8b8b8"/><rect x="691.6" y="0" width="0.9" height="5.2" fill="#e8e8e8"/><rect x="702.0" y="0" width="0.9" height="1.6" fill="#b8b8b8"/><rect x="712.5" y="0" width="0.9" height="1.6" fill="#b8b8b8"/><rect x="722.9" y="0" width="0.9" height="1.6" fill="#b8b8b8"/><rect x="733.4" y="0" width="0.9" height="1.6" fill="#b8b8b8"/><rect x="743.9" y="0" width="0.9" height="3.4" fill="#dadada"/><rect x="754.3" y="0" width="0.9" height="1.6" fill="#b8b8b8"/></svg><div class="t" style="left:65.8px;top:27.6px;font-size:5.8px;color:#f0f0f0">00:00:00;00</div><div class="t" style="left:170.3px;top:27.6px;font-size:5.8px;color:#f0f0f0">00:00:10;00</div><div class="t" style="left:274.8px;top:27.6px;font-size:5.8px;color:#f0f0f0">00:00:20;00</div><div class="t" style="left:379.3px;top:27.6px;font-size:5.8px;color:#f0f0f0">00:00:30;00</div><div class="t" style="left:483.8px;top:27.6px;font-size:5.8px;color:#f0f0f0">00:00:40;00</div><div class="t" style="left:588.3px;top:27.6px;font-size:5.8px;color:#f0f0f0">00:00:50;00</div><div class="t" style="left:692.8px;top:27.6px;font-size:5.8px;color:#f0f0f0">00:01:00;00</div><div class="t" style="left:214px;top:27.6px;font-size:5.8px;color:#f0f0f0">00:00:14;00</div><div class="lane" style="top:32.5px;height:13.1px"></div><div class="trk" style="top:32.5px;height:13.1px"><div class="t" style="top:-1.3px">Spur 9</div><svg style="left:55.5px;top:-6.5px" width="6" height="4" viewBox="0 0 6 4"><ellipse cx="3" cy="2" rx="2.6" ry="1.5" fill="none" stroke="#444" stroke-width=".7"/><circle cx="3" cy="2" r=".8" fill="#444"/></svg><svg style="left:55.6px;top:3px" width="6" height="6.4" viewBox="0 0 5 6"><rect x="0.1" y="2.4" width="4.8" height="3.4" fill="#464646"/><path d="M1.2 2.4 V1.4 Q2.5 0 3.8 1.4" fill="none" stroke="#424242" stroke-width=".7"/></svg></div><div class="lane" style="top:45.6px;height:22.25px"></div><div class="trk" style="top:45.6px;height:22.25px"><div class="t" style="top:7.7px">Spur 8</div><svg style="left:55.5px;top:2.6px" width="6" height="4" viewBox="0 0 6 4"><ellipse cx="3" cy="2" rx="2.6" ry="1.5" fill="none" stroke="#444" stroke-width=".7"/><circle cx="3" cy="2" r=".8" fill="#444"/></svg><svg style="left:55.6px;top:11.4px" width="6" height="6.4" viewBox="0 0 5 6"><rect x="0.1" y="2.4" width="4.8" height="3.4" fill="#464646"/><path d="M1.2 2.4 V1.4 Q2.5 0 3.8 1.4" fill="none" stroke="#424242" stroke-width=".7"/></svg></div><div class="lane" style="top:67.85px;height:22.25px"></div><div class="trk" style="top:67.85px;height:22.25px"><div class="t" style="top:7.7px">Spur 7</div><svg style="left:55.5px;top:2.6px" width="6" height="4" viewBox="0 0 6 4"><ellipse cx="3" cy="2" rx="2.6" ry="1.5" fill="none" stroke="#444" stroke-width=".7"/><circle cx="3" cy="2" r=".8" fill="#444"/></svg><svg style="left:55.6px;top:11.4px" width="6" height="6.4" viewBox="0 0 5 6"><rect x="0.1" y="2.4" width="4.8" height="3.4" fill="#464646"/><path d="M1.2 2.4 V1.4 Q2.5 0 3.8 1.4" fill="none" stroke="#424242" stroke-width=".7"/></svg></div><div class="lane" style="top:90.1px;height:22.25px"></div><div class="trk" style="top:90.1px;height:22.25px"><div class="t" style="top:7.7px">Spur 6</div><svg style="left:55.5px;top:2.6px" width="6" height="4" viewBox="0 0 6 4"><ellipse cx="3" cy="2" rx="2.6" ry="1.5" fill="none" stroke="#444" stroke-width=".7"/><circle cx="3" cy="2" r=".8" fill="#444"/></svg><svg style="left:55.6px;top:11.4px" width="6" height="6.4" viewBox="0 0 5 6"><rect x="0.1" y="2.4" width="4.8" height="3.4" fill="#464646"/><path d="M1.2 2.4 V1.4 Q2.5 0 3.8 1.4" fill="none" stroke="#424242" stroke-width=".7"/></svg></div><div class="lane" style="top:112.35px;height:22.25px"></div><div class="trk" style="top:112.35px;height:22.25px"><div class="t" style="top:7.7px">Spur 5</div><svg style="left:55.5px;top:2.6px" width="6" height="4" viewBox="0 0 6 4"><ellipse cx="3" cy="2" rx="2.6" ry="1.5" fill="none" stroke="#444" stroke-width=".7"/><circle cx="3" cy="2" r=".8" fill="#444"/></svg><svg style="left:55.6px;top:11.4px" width="6" height="6.4" viewBox="0 0 5 6"><rect x="0.1" y="2.4" width="4.8" height="3.4" fill="#464646"/><path d="M1.2 2.4 V1.4 Q2.5 0 3.8 1.4" fill="none" stroke="#424242" stroke-width=".7"/></svg></div><div class="lane" style="top:134.6px;height:22.6px"></div><div class="trk" style="top:134.6px;height:22.6px"><div class="t" style="top:7.9px">Spur 4</div><svg style="left:55.5px;top:2.6px" width="6" height="4" viewBox="0 0 6 4"><ellipse cx="3" cy="2" rx="2.6" ry="1.5" fill="none" stroke="#444" stroke-width=".7"/><circle cx="3" cy="2" r=".8" fill="#444"/></svg><svg style="left:55.6px;top:11.4px" width="6" height="6.4" viewBox="0 0 5 6"><rect x="0.1" y="2.4" width="4.8" height="3.4" fill="#464646"/><path d="M1.2 2.4 V1.4 Q2.5 0 3.8 1.4" fill="none" stroke="#424242" stroke-width=".7"/></svg></div><div class="a" style="left:65px;top:32.8px;width:63.5px;height:12.7px;background:linear-gradient(90deg,#3e3e3e 66%,#474747 68%)"></div><div class="a" style="left:70px;top:33.5px;width:13px;height:8.5px;background:#fafafa"><div class="a" style="left:2px;top:3px;width:9px;height:1px;background:#ccc"></div></div><div class="a" style="left:92px;top:33.5px;width:12.5px;height:8.5px;background:#fafafa"><div class="a" style="left:2px;top:3px;width:9px;height:1px;background:#ccc"></div><div class="a" style="left:2px;top:5.5px;width:9px;height:1px;background:#ddd"></div></div><div class="a" style="left:87px;top:33px;width:1px;height:13px;background:#2a2a2a"></div><div class="a" style="left:107.5px;top:33px;width:1px;height:13px;background:#333"></div><div class="clip" style="left:129px;top:46.1px;width:170.3px;height:21.5px"><svg style="left:14px;top:6.6px" width="8" height="10" viewBox="0 0 8 10"><path d="M1 3 V1 H7 V3 M4 1 V9 M2.5 9 H5.5" fill="none" stroke="#404040" stroke-width="1.15"/></svg><div class="t" style="left:32px;top:8.3px;font-size:6.8px">Text 6</div></div><div class="clip" style="left:300px;top:46.1px;width:211.5px;height:21.5px"><svg style="left:15px;top:6.6px" width="8" height="10" viewBox="0 0 8 10"><path d="M1 3 V1 H7 V3 M4 1 V9 M2.5 9 H5.5" fill="none" stroke="#404040" stroke-width="1.15"/></svg><div class="t" style="left:32.5px;top:8.3px;font-size:6.8px">Text 7</div></div><div class="clip" style="left:512.5px;top:46.1px;width:239.5px;height:21.5px"><svg style="left:14px;top:6.6px" width="8" height="10" viewBox="0 0 8 10"><path d="M1 3 V1 H7 V3 M4 1 V9 M2.5 9 H5.5" fill="none" stroke="#404040" stroke-width="1.15"/></svg><div class="t" style="left:32px;top:8.3px;font-size:6.8px">Text 8</div></div><div class="clip" style="left:129px;top:68.35px;width:170.3px;height:21.5px"><div class="a" style="left:4px;top:4.1px;width:97.5px;height:13.2px;background:#fdfdfd;overflow:hidden"><div class="a" style="left:89.5px;top:1.5px;width:6px;height:1.2px;background:#777"></div><div class="a" style="left:77.5px;top:4px;width:18px;height:1.2px;background:repeating-linear-gradient(90deg,#666 0 1.5px,#ccc 1.5px 2.2px)"></div><div class="a" style="left:41.5px;top:6.6px;width:54px;height:1.2px;background:repeating-linear-gradient(90deg,#b0b0b0 0 1.5px,#e8e8e8 1.5px 2.2px,#c4c4c4 2.2px 3.4px,#f2f2f2 3.4px 4.3px)"></div><div class="a" style="left:3px;top:9.6px;width:92.5px;height:1.2px;background:repeating-linear-gradient(90deg,#b8b8b8 0 1.5px,#e8e8e8 1.5px 2.2px,#c8c8c8 2.2px 3.4px,#f2f2f2 3.4px 4.3px)"></div></div><div class="t" style="left:106px;top:8.4px">GG7-01ar-hell.jpg</div></div><div class="clip" style="left:300px;top:68.35px;width:211.5px;height:21.5px"><div class="a" style="left:4px;top:4.1px;width:98px;height:13.2px;background:#fdfdfd;overflow:hidden"><div class="a" style="left:90px;top:1.5px;width:6px;height:1.2px;background:#777"></div><div class="a" style="left:78px;top:4px;width:18px;height:1.2px;background:repeating-linear-gradient(90deg,#666 0 1.5px,#ccc 1.5px 2.2px)"></div><div class="a" style="left:42px;top:6.6px;width:54px;height:1.2px;background:repeating-linear-gradient(90deg,#b0b0b0 0 1.5px,#e8e8e8 1.5px 2.2px,#c4c4c4 2.2px 3.4px,#f2f2f2 3.4px 4.3px)"></div><div class="a" style="left:3px;top:9.6px;width:93px;height:1.2px;background:repeating-linear-gradient(90deg,#b8b8b8 0 1.5px,#e8e8e8 1.5px 2.2px,#c8c8c8 2.2px 3.4px,#f2f2f2 3.4px 4.3px)"></div></div><div class="t" style="left:106px;top:8.4px">GG7-01ar.jpg</div></div><div class="clip" style="left:512.5px;top:68.35px;width:239.5px;height:21.5px"><div class="a" style="left:3.5px;top:4.1px;width:105px;height:13.2px;background:#fdfdfd;overflow:hidden"><div class="a" style="left:2px;top:1.5px;width:101px;height:1.4px;background:repeating-linear-gradient(90deg,#b0b0b0 0 1.5px,#e8e8e8 1.5px 2.2px,#c4c4c4 2.2px 3.4px,#f2f2f2 3.4px 4.3px)"></div><div class="a" style="left:2px;top:4.5px;width:101px;height:1.4px;background:repeating-linear-gradient(90deg,#b0b0b0 0 1.5px,#e8e8e8 1.5px 2.2px,#c4c4c4 2.2px 3.4px,#f2f2f2 3.4px 4.3px)"></div><div class="a" style="left:2px;top:7.5px;width:101px;height:1.4px;background:repeating-linear-gradient(90deg,#b0b0b0 0 1.5px,#e8e8e8 1.5px 2.2px,#c4c4c4 2.2px 3.4px,#f2f2f2 3.4px 4.3px)"></div><div class="a" style="left:50px;top:10.5px;width:53px;height:1.4px;background:repeating-linear-gradient(90deg,#b0b0b0 0 1.5px,#e8e8e8 1.5px 2.2px,#c4c4c4 2.2px 3.4px,#f2f2f2 3.4px 4.3px)"></div></div><div class="t" style="left:112.5px;top:8.4px">GG7-02ar-hell.jpg</div></div><div class="clip" style="left:129px;top:90.6px;width:382.5px;height:21.5px"><svg style="left:14px;top:6.6px" width="8" height="10" viewBox="0 0 8 10"><path d="M1 3 V1 H7 V3 M4 1 V9 M2.5 9 H5.5" fill="none" stroke="#404040" stroke-width="1.15"/></svg><div class="t" style="left:32px;top:8.3px;font-size:6.8px">Text 4</div><div class="a" style="left:170.2px;top:0;width:0.8px;height:21px;background:#3a3a3a"></div></div><div class="clip" style="left:512.5px;top:90.6px;width:239.5px;height:21.5px"><svg style="left:14px;top:6.6px" width="8" height="10" viewBox="0 0 8 10"><path d="M1 3 V1 H7 V3 M4 1 V9 M2.5 9 H5.5" fill="none" stroke="#404040" stroke-width="1.15"/></svg><div class="t" style="left:32px;top:8.3px;font-size:6.8px">Text 5</div></div><div class="clip" style="left:129px;top:112.85px;width:170.3px;height:21.5px"><svg style="left:0;top:0" width="170" height="21.6"><path d="M4 21.6 L4.0 20.4 L5.1 20.8 L6.4 20.1 L7.4 19.3 L8.2 21.3 L9.3 20.0 L10.5 19.9 L11.8 17.0 L13.0 16.0 L14.1 21.3 L14.8 16.9 L15.8 18.0 L16.8 18.2 L18.1 21.3 L19.4 18.9 L20.7 21.3 L21.8 15.9 L22.9 16.6 L24.3 21.3 L25.3 19.9 L26.6 21.5 L27.8 21.3 L29.2 21.3 L30.1 21.5 L31.0 21.5 L31.7 19.7 L33.0 20.6 L34.2 20.2 L35.5 20.1 L36.4 21.3 L37.5 20.9 L38.6 21.4 L39.3 20.9 L40.3 21.0 L41.0 21.3 L41.9 20.3 L42.8 20.5 L43.7 21.3 L44.8 20.6 L46.1 21.0 L47.3 21.4 L48.6 21.3 L49.4 21.3 L50.4 21.4 L51.2 21.3 L52.1 21.3 L53.2 20.8 L54.1 19.7 L55.1 18.7 L55.9 21.3 L57.2 18.7 L58.6 20.0 L59.8 20.6 L60.6 21.4 L61.9 21.3 L63.1 21.3 L64.4 19.5 L65.2 20.5 L66.2 19.6 L67.1 17.1 L68.0 18.1 L68.9 21.3 L70.1 16.8 L71.4 19.4 L72.5 18.1 L73.2 20.8 L73.9 21.3 L74.7 19.4 L75.6 18.9 L76.5 18.8 L77.7 20.1 L78.6 19.3 L79.9 19.0 L81.0 17.2 L82.0 18.1 L82.7 17.9 L84.1 21.3 L85.3 20.7 L86.6 21.3 L87.9 18.9 L88.6 19.9 L89.9 20.8 L91.2 20.9 L92.0 19.5 L93.3 20.7 L94.6 20.6 L95.8 19.1 L96.9 19.0 L97.8 17.9 L98.7 18.0 L99.5 21.3 L100.5 16.5 L101.7 17.4 L102.9 19.2 L104.1 17.6 L105.3 19.4 L106.4 18.3 L107.8 19.7 L109.1 19.9 L109.8 20.1 L110.7 20.5 L112.1 19.9 L113.4 19.0 L114.6 16.9 L116.0 19.0 L117.2 21.3 L118.5 19.1 L119.3 21.3 L120.6 21.3 L121.6 19.9 L122.3 18.2 L123.4 18.1 L124.4 17.0 L125.8 19.3 L126.7 15.6 L128.0 21.3 L129.0 18.6 L130.2 21.3 L131.1 21.3 L132.2 17.4 L133.2 17.1 L134.0 18.8 L135.3 15.4 L136.1 17.5 L137.2 18.3 L138.0 17.9 L139.1 18.9 L140.1 17.4 L141.0 18.1 L141.9 18.0 L143.2 19.8 L144.0 19.0 L144.8 16.7 L146.1 18.1 L146.9 18.9 L147.8 16.0 L149.1 17.1 L150.2 21.3 L151.4 21.3 L152.4 19.8 L153.7 17.3 L154.7 19.9 L155.7 17.6 L157.1 16.0 L158.2 19.5 L159.0 21.3 L159.9 19.1 L161.2 21.3 L162.4 16.0 L163.8 16.2 L164.8 19.9 L165.7 19.1 L166.7 20.2 L167.8 19.9 L169.1 18.8 L170 21.6Z" fill="#909090"/></svg><svg style="left:4px;top:3.9px" width="24" height="14"><use href="#man" width="24" height="14"/></svg><div class="t" style="left:32px;top:8.0px;font-size:6.3px">DEARArt7.trec (Kamera)</div></div><div class="clip" style="left:300px;top:112.85px;width:211.5px;height:21.5px"><svg style="left:0;top:0" width="211.5" height="21.6"><path d="M34 21.6 L34.0 6.3 L35.2 2.6 L36.2 20.7 L36.9 20.9 L37.7 7.1 L38.4 6.9 L39.6 4.6 L40.5 10.4 L41.1 1.9 L41.8 9.9 L42.8 6.8 L44.0 13.8 L45.1 13.2 L46.1 10.3 L47.2 20.2 L48.0 20.2 L49.0 9.7 L49.8 20.4 L50.7 20.4 L51.6 19.5 L52.4 9.8 L53.1 10.5 L54.0 11.0 L55.0 8.1 L55.8 8.7 L56.7 10.4 L57.3 8.9 L58.3 7.7 L59.3 8.6 L59.9 8.7 L60.9 7.0 L62.0 13.2 L62.9 10.1 L63.6 14.6 L64.3 8.1 L65.2 4.3 L66.0 2.7 L67.1 8.9 L68.2 8.6 L69.2 11.8 L70.0 11.5 L70.9 3.6 L72.1 1.9 L72.8 6.3 L73.6 9.5 L74.6 10.6 L75.8 6.7 L76.9 10.9 L77.6 8.9 L78.7 11.3 L79.5 3.4 L80.7 8.2 L81.4 8.8 L82.4 6.5 L83.5 1.7 L84.6 5.6 L85.5 10.7 L86.2 10.8 L87.0 5.8 L88.0 4.5 L88.8 9.6 L89.5 13.2 L90.5 10.8 L91.3 12.6 L92.0 7.0 L92.8 5.7 L93.9 6.7 L94.8 4.3 L95.9 8.1 L96.7 13.8 L97.5 10.4 L98.4 20.3 L99.2 19.6 L100.3 21.2 L101.2 6.1 L102.0 13.1 L102.7 10.3 L103.7 11.2 L104.5 9.3 L105.4 9.4 L106.4 13.3 L107.5 8.5 L108.5 19.8 L109.6 19.9 L110.8 6.4 L111.8 6.3 L112.6 8.0 L113.6 11.4 L114.6 3.1 L115.4 10.6 L116.2 12.9 L117.0 13.3 L117.9 14.3 L119.0 10.1 L120.0 14.0 L121.1 13.8 L122.1 11.8 L122.8 10.4 L123.5 20.0 L124.4 8.7 L125.2 20.1 L126.2 20.6 L127.4 20.1 L128.1 12.7 L128.9 4.9 L129.8 11.1 L130.4 19.9 L131.1 20.9 L132.0 7.9 L132.8 11.7 L133.4 7.9 L134.2 9.7 L135.3 11.6 L136.0 11.6 L136.8 10.5 L137.9 10.3 L138.9 10.3 L139.5 13.9 L140.5 20.5 L141.4 20.6 L142.6 10.3 L143.3 11.2 L144.4 7.6 L145.5 4.5 L146.3 19.7 L147.1 12.9 L148.2 10.6 L149.1 9.6 L149.7 20.7 L150.3 20.4 L151.5 20.5 L152.3 13.4 L153.3 13.7 L154.5 11.5 L155.1 10.7 L155.7 9.1 L156.5 14.6 L157.4 12.2 L158.1 12.7 L158.9 13.9 L159.6 20.2 L160.4 13.5 L161.1 7.9 L162.2 14.9 L163.1 12.4 L164.2 9.9 L165.2 13.1 L165.9 6.1 L166.6 13.2 L167.4 12.7 L168.2 19.8 L169.3 19.4 L170.4 21.1 L171.5 10.6 L172.4 19.7 L173.4 20.3 L174.5 8.1 L175.5 10.6 L176.2 14.0 L177.2 14.6 L178.1 14.7 L178.9 6.3 L179.7 10.9 L180.3 7.0 L180.9 11.5 L181.8 3.4 L182.6 6.4 L183.5 2.1 L184.6 9.6 L185.5 6.2 L186.2 19.8 L187.1 20.3 L187.8 19.5 L188.6 7.5 L189.4 4.3 L190.5 10.4 L191.2 12.9 L192.0 11.7 L193.1 8.5 L194.0 13.2 L194.7 9.9 L195.3 8.5 L196.2 7.5 L197.3 4.9 L197.9 11.6 L198.5 11.1 L199.2 5.9 L200.3 3.7 L201.1 21.1 L201.7 19.3 L202.5 20.5 L203.6 5.1 L204.5 11.9 L205.5 6.6 L206.4 7.6 L207.4 10.5 L208.5 3.9 L209.2 7.3 L209.8 9.9 L210.5 5.4 L211.5 21.6Z" fill="#8e8e8e"/></svg><div class="a" style="left:9px;top:17px;width:14px;height:4px;background:#8a8a8a"></div><svg style="left:4px;top:3.9px" width="24" height="14"><use href="#woman" width="14" height="14" x="0"/><rect x="14" width="10" height="14" fill="#eee"/><rect x="19" y="2" width="1.4" height="9" fill="#777"/></svg><div class="t" style="left:33px;top:8.0px;font-size:6.25px">V0004XXAR.mp4</div></div><div class="clip" style="left:512.5px;top:112.85px;width:239.5px;height:21.5px"><svg style="left:0;top:0" width="239.5" height="21.6"><path d="M4 21.6 L4.0 20.3 L5.3 20.8 L6.1 21.2 L7.0 19.9 L7.8 21.0 L9.2 20.8 L10.4 21.3 L11.6 21.4 L12.5 21.3 L13.3 21.3 L14.0 21.1 L15.0 19.0 L15.8 21.3 L16.7 20.5 L17.4 21.3 L18.4 21.5 L19.5 21.3 L20.2 21.3 L21.1 21.3 L21.9 21.3 L22.8 19.0 L23.9 19.8 L24.9 17.4 L25.8 19.4 L27.1 18.8 L28.1 17.7 L28.9 15.9 L30.2 18.4 L31.4 15.4 L32.4 21.3 L33.3 15.8 L34.2 21.3 L35.0 21.3 L36.1 19.8 L37.1 21.3 L38.1 20.5 L38.8 20.5 L39.8 19.2 L41.2 19.5 L42.5 20.8 L43.5 21.3 L44.8 21.5 L45.8 21.3 L46.8 18.9 L47.6 21.3 L48.6 16.6 L49.4 18.5 L50.6 16.1 L51.6 19.3 L52.7 21.3 L53.6 16.4 L54.9 18.2 L56.1 19.8 L57.2 20.1 L58.2 19.2 L59.2 17.5 L60.3 21.3 L61.6 19.4 L62.8 20.4 L63.6 21.3 L64.6 17.3 L65.5 18.2 L66.6 16.3 L67.3 20.4 L68.2 19.2 L68.9 18.0 L70.3 21.3 L71.7 21.3 L73.0 19.2 L74.2 17.2 L75.1 19.4 L76.3 19.9 L77.2 19.5 L78.1 20.0 L79.2 19.2 L80.4 19.3 L81.5 18.6 L82.6 16.2 L83.6 19.5 L84.7 19.6 L85.4 21.5 L86.7 20.0 L88.0 19.4 L89.0 20.6 L89.8 21.3 L90.9 21.5 L91.9 19.6 L93.2 21.0 L94.3 21.3 L95.3 20.8 L96.0 21.3 L96.8 21.4 L98.1 21.3 L99.1 21.3 L100.4 20.5 L101.7 19.7 L103.1 21.3 L104.5 20.8 L105.7 19.5 L107.1 18.3 L107.9 21.3 L109.0 21.3 L109.9 21.5 L110.9 19.9 L111.6 21.4 L112.4 20.8 L113.7 21.3 L114.5 21.3 L115.5 21.2 L116.8 20.0 L117.9 21.2 L118.8 21.5 L119.9 21.3 L120.7 21.5 L121.6 21.3 L123.0 21.4 L124.3 21.1 L125.2 21.3 L126.4 21.3 L127.1 20.3 L127.9 20.1 L128.8 21.3 L129.8 21.3 L130.5 18.6 L131.4 16.4 L132.2 21.3 L133.3 18.1 L134.1 14.8 L134.9 16.3 L135.9 18.9 L137.3 21.3 L138.7 18.9 L139.4 20.1 L140.5 18.8 L141.3 18.0 L142.1 21.3 L143.0 17.9 L144.2 16.5 L145.4 16.9 L146.5 17.9 L147.7 20.0 L148.7 21.2 L149.8 20.8 L150.7 18.0 L151.9 20.1 L153.2 18.3 L154.5 19.8 L155.8 18.2 L157.2 17.4 L158.5 19.2 L159.8 20.9 L161.1 21.2 L162.4 20.6 L163.6 18.6 L164.5 20.6 L165.3 17.9 L166.5 20.1 L167.7 18.0 L168.8 19.1 L169.7 15.6 L170.9 18.3 L171.7 17.7 L172.6 21.3 L173.4 21.3 L174.4 19.4 L175.3 18.9 L176.4 21.3 L177.5 19.2 L178.2 18.7 L179.5 19.5 L180.8 19.5 L182.2 18.3 L183.3 19.6 L184.4 20.4 L185.4 18.4 L186.6 19.9 L187.8 21.3 L189.1 21.1 L189.8 21.5 L190.8 21.3 L192.0 21.4 L193.3 21.0 L194.7 21.3 L195.5 21.5 L196.8 21.4 L197.8 20.7 L199.0 21.3 L200.3 20.0 L201.6 20.2 L202.6 20.5 L203.5 20.6 L204.5 21.4 L205.6 21.3 L206.6 21.4 L207.6 21.4 L208.7 20.6 L209.5 21.3 L210.3 21.3 L211.7 21.3 L212.7 21.5 L213.5 21.4 L214.2 21.3 L215.2 21.3 L216.4 19.2 L217.4 21.2 L218.2 21.3 L219.2 21.5 L220.2 21.4 L221.1 21.5 L222.0 20.7 L223.0 19.0 L224.2 21.3 L225.0 21.4 L225.9 21.4 L226.9 21.3 L228.3 21.0 L229.6 20.4 L230.6 20.2 L231.6 20.5 L232.7 21.3 L233.9 21.5 L235.1 21.3 L236.2 20.6 L237.6 21.5 L238.3 21.3 L239.3 19.1 L239.5 21.6Z" fill="#909090"/></svg><svg style="left:4px;top:3.9px" width="23" height="14.4"><use href="#man" width="23" height="14.4"/></svg><div class="t" style="left:32px;top:8.0px;font-size:6.3px">DEARArt7.trec (Kamera)</div></div><div class="clip" style="left:65px;top:135.1px;width:687px;height:22.1px;border-radius:0;box-shadow:inset 0 1px 0 #6a6a6a,inset 0 -1px 0 #747474"><svg style="left:4.5px;top:3.6px" width="18" height="14.2"><rect width="18" height="14.2" fill="#fafafa"/><use href="#woman" x="4" width="10" height="14.2"/></svg><div class="t" style="left:27.5px;top:7.9px">FotoDerUebersetzerin.jpg</div></div><div class="a" style="left:211.6px;top:27px;width:1px;height:130px;background:#b4b4b4"></div><svg style="left:201px;top:17px" width="23" height="11" viewBox="0 0 23 11"><rect x="0.5" y="0.5" width="6" height="6" fill="#2fae4a"/><rect x="16.5" y="0.5" width="6" height="6" fill="#c8382e"/><path d="M6 0 H17 V6 L11.5 10.5 L6 6Z" fill="#a0a0a0" stroke="#d0d0d0" stroke-width=".5"/></svg><div class="a" style="left:752px;top:33px;width:8px;height:124px;background:#383838"></div><div class="a" style="left:752.5px;top:66px;width:7.5px;height:54px;background:linear-gradient(90deg,#858585,#6c6c6c)"></div><svg style="left:754.5px;top:36.6px" width="3.4" height="2.6" viewBox="0 0 4 3"><path d="M0 3 H4 L2 0Z" fill="#e8e8e8"/></svg><svg style="left:754.5px;top:151.5px" width="3.4" height="2.6" viewBox="0 0 4 3"><path d="M0 0 H4 L2 3Z" fill="#e8e8e8"/></svg><div class="a" style="left:0;top:157.4px;width:760px;height:9px;background:#1c1c1c"></div><div class="a" style="left:10px;top:161.5px;width:49px;height:1.2px;background:#4a4a4a"></div><div class="a" style="left:4px;top:158.5px;width:7px;height:7px;border-radius:50%;background:radial-gradient(circle at 50% 35%,#8a8a8a,#4c4c4c)"></div><div class="a" style="left:65px;top:158.6px;width:687px;height:8px;background:#3a3a3a"></div><svg style="left:68px;top:160.5px" width="3" height="4" viewBox="0 0 3 4"><path d="M3 0 V4 L0 2Z" fill="#e0e0e0"/></svg><svg style="left:746px;top:160.5px" width="3" height="4" viewBox="0 0 3 4"><path d="M0 0 V4 L3 2Z" fill="#e0e0e0"/></svg><div class="a" style="left:75.5px;top:159.2px;width:325.3px;height:7.2px;background:linear-gradient(#8e8e8e,#7a7a7a)"></div><div class="a" style="left:0;top:166.4px;width:760px;height:2px;background:#dcdcdc"></div></div>
</body>
</html>
